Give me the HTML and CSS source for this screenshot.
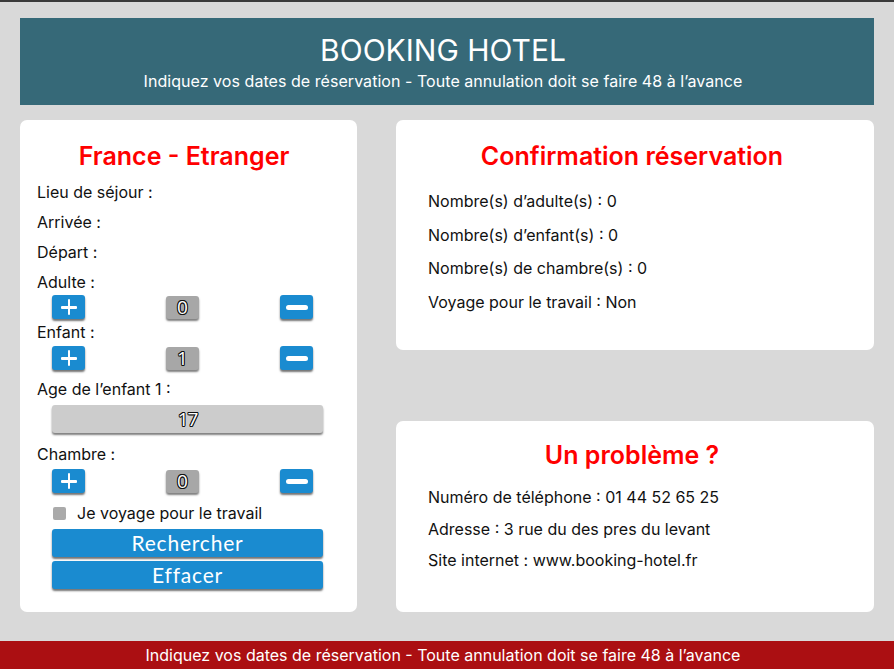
FILE: index.html
```html
<!DOCTYPE html>
<html lang="fr">
<head>
<meta charset="utf-8">
<title>Booking Hotel</title>
<link rel="stylesheet" href="styles.css">
</head>
<body>
<div class="page">
  <header class="header">
    <h1 class="header-title">BOOKING HOTEL</h1>
    <p class="header-sub">Indiquez vos dates de réservation - Toute annulation doit se faire 48 à l’avance</p>
  </header>
  <main class="main">
    <section class="card card-left">
      <h2 class="card-title">France - Etranger</h2>
      <div class="label label-tall label-first">Lieu de séjour :</div>
      <div class="label label-tall">Arrivée :</div>
      <div class="label label-tall">Départ :</div>
      <div class="label label-adult">Adulte :</div>
      <div class="counter">
        <button class="btn-icon"><span class="plus"></span></button>
        <span class="count">0</span>
        <button class="btn-icon"><span class="minus"></span></button>
      </div>
      <div class="label label-gap">Enfant :</div>
      <div class="counter counter-child">
        <button class="btn-icon"><span class="plus"></span></button>
        <span class="count">1</span>
        <button class="btn-icon"><span class="minus"></span></button>
      </div>
      <div class="label label-age">Age de l’enfant 1 :</div>
      <div class="age">17</div>
      <div class="label label-room">Chambre :</div>
      <div class="counter counter-room">
        <button class="btn-icon"><span class="plus"></span></button>
        <span class="count">0</span>
        <button class="btn-icon"><span class="minus"></span></button>
      </div>
      <label class="check"><span class="box"></span>Je voyage pour le travail</label>
      <button class="btn-wide">Rechercher</button>
      <button class="btn-wide">Effacer</button>
    </section>
    <div class="right">
      <section class="card card-confirm">
        <h2 class="card-title">Confirmation réservation</h2>
        <ul class="info info-confirm">
          <li>Nombre(s) d’adulte(s) : 0</li>
          <li>Nombre(s) d’enfant(s) : 0</li>
          <li>Nombre(s) de chambre(s) : 0</li>
          <li>Voyage pour le travail : Non</li>
        </ul>
      </section>
      <section class="card card-problem">
        <h2 class="card-title">Un problème ?</h2>
        <ul class="info info-problem">
          <li>Numéro de téléphone : 01 44 52 65 25</li>
          <li>Adresse : 3 rue du des pres du levant</li>
          <li>Site internet : www.booking-hotel.fr</li>
        </ul>
      </section>
    </div>
  </main>
  <footer class="footer">Indiquez vos dates de réservation - Toute annulation doit se faire 48 à l’avance</footer>
</div>
</body>
</html>
```
FILE: styles.css
```css
* { box-sizing: border-box; }
html, body { margin: 0; padding: 0; }
body {
  background: #d9d9d9;
  font-family: Inter, "Liberation Sans", sans-serif;
  color: #111;
  border-top: 2px solid #3a3a3a;
  height: 669px;
  overflow: hidden;
}
.page { display: flex; flex-direction: column; height: 667px; }
.header {
  margin: 16px 20px 0;
  height: 87px;
  background: #366978;
  color: #fff;
  text-align: center;
  padding: 14px 8px 0 0;
}
.header-title {
  margin: 0;
  font-size: 30px;
  font-weight: 400;
  line-height: 36px;
}
.header-sub {
  margin: 3px 0 0;
  font-size: 16px;
  line-height: 20px;
  letter-spacing: 0.05px;
}
.main {
  display: grid;
  grid-template-columns: 337px 478px;
  column-gap: 39px;
  margin: 15px 20px 0;
  height: 492px;
}
.card {
  background: #fff;
  border-radius: 7px;
}
.card-title {
  margin: 0;
  color: #ff0000;
  font-size: 25px;
  font-weight: 600;
  line-height: 29px;
  text-align: center;
}
.card-left { padding: 22px 17px 0; }
.card-left .card-title { padding-right: 9px; }
.label { font-size: 16px; line-height: 20px; }
.label-tall { line-height: 30px; }
.label-first { margin-top: 6px; }
.label-adult { margin-top: 5px; }
.label-gap { margin-top: 3px; }
.label-age { margin-top: 9px; }
.label-room { margin-top: 11px; }
.counter {
  display: flex;
  justify-content: space-between;
  align-items: center;
  margin: 3px 27px 0 15px;
  height: 24px;
}
.counter-child { margin-top: 4px; }
.counter-room { margin-top: 5px; }
.btn-icon {
  width: 33px;
  height: 24px;
  border: none;
  padding: 0;
  border-radius: 3px;
  background: #1a8bd0;
  box-shadow: 0 2px 2px rgba(0,0,0,0.55);
  display: flex;
  align-items: center;
  justify-content: center;
}
.plus { position: relative; width: 16px; height: 16px; display: block; }
.plus::before, .plus::after {
  content: "";
  position: absolute;
  background: #fff;
  border-radius: 1px;
}
.plus::before { left: 0; top: 7px; width: 16px; height: 2.5px; }
.plus::after { left: 7px; top: 0; width: 2.5px; height: 16px; }
.minus {
  display: block;
  width: 22px;
  height: 5px;
  background: #fff;
  border-radius: 3px;
}
.count, .age {
  text-align: center;
  font-family: "Open Sans", sans-serif;
  font-size: 19px;
  color: #fff;
  text-shadow:
    -1px 0 #111, 1px 0 #111, 0 -1px #111, 0 1px #111,
    -0.7px -0.7px #111, 0.7px -0.7px #111, -0.7px 0.7px #111, 0.7px 0.7px #111;
  border-radius: 3px;
  box-shadow: 0 2px 2px rgba(0,0,0,0.5);
}
.count {
  width: 33px;
  height: 23px;
  background: #a7a7a7;
  line-height: 23px;
}
.age {
  margin: 6px 17px 0 15px;
  height: 28px;
  background: #cccccc;
  line-height: 28px;
  letter-spacing: -1px;
}
.check {
  display: flex;
  align-items: center;
  margin: 10px 0 0 16px;
  height: 20px;
  font-size: 16px;
  line-height: 20px;
}
.box {
  width: 13px;
  height: 13px;
  background: #aaaaaa;
  border-radius: 2px;
  margin-right: 11px;
}
.btn-wide {
  display: block;
  width: 271px;
  height: 28px;
  margin: 6px 0 0 15px;
  border: none;
  border-radius: 3px;
  background: #1a8bd0;
  box-shadow: 0 2px 2px rgba(0,0,0,0.55);
  color: #fff;
  font-family: Lato, "Open Sans", sans-serif;
  font-size: 21px;
  letter-spacing: 0.8px;
  line-height: 28px;
  padding: 0;
}
.btn-wide + .btn-wide { margin-top: 4px; }
.right {
  display: flex;
  flex-direction: column;
  justify-content: space-between;
}
.card-confirm { height: 230px; padding: 22px 0 0 32px; }
.card-problem { height: 191px; padding: 20px 0 0 32px; }
.card-confirm .card-title, .card-problem .card-title { padding-right: 38px; }
.info { list-style: none; margin: 0; padding: 0; font-size: 16px; line-height: 20px; }
.info-confirm { margin-top: 20px; }
.info-confirm li + li { margin-top: 13.5px; }
.info-problem { margin-top: 17px; }
.info-problem li + li { margin-top: 11.5px; }
.footer {
  margin-top: auto;
  height: 28px;
  background: #ab0f12;
  color: #fff;
  text-align: center;
  font-size: 16px;
  line-height: 28px;
  padding-right: 8px;
}
```
